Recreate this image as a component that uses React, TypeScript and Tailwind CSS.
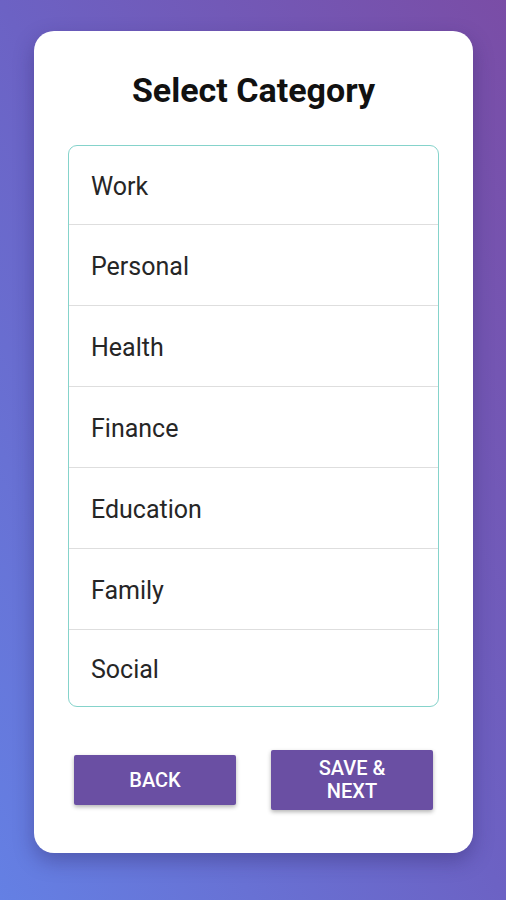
const categories = ["Work", "Personal", "Health", "Finance", "Education", "Family", "Social"];

function App() {
    return (
        <div
            className="w-[506px] h-[900px] bg-[linear-gradient(to_top_right,#6480e4_0%,#6c62c4_50%,#7a4da6_100%)] pt-[31px] px-[34px]"
            style={{ fontFamily: "Roboto, 'Liberation Sans', sans-serif" }}
        >
            <div className="w-[439px] h-[822px] bg-white rounded-[20px] shadow-[0_8px_20px_rgba(40,30,90,0.35)] pt-[38px] px-[34px] flex flex-col">
                {/* Título */}
                <h1 className="text-[34px] leading-[42px] font-bold text-[#111] text-center">Select Category</h1>

                {/* Lista de categorias */}
                <div className="mt-[34px] border border-[#85d3cb] rounded-[9px] overflow-hidden">
                    {categories.map((c, i) => {
                        const h = i === 0 ? "h-[78px]" : i === categories.length - 1 ? "h-[77px]" : "h-[81px]";
                        return (
                            <div
                                key={c}
                                className={`flex items-center pl-[22px] pt-[4px] text-[25px] text-[#262626] ${i > 0 ? "border-t border-[#dedede]" : ""} ${h}`}
                            >
                                {c}
                            </div>
                        );
                    })}
                </div>

                {/* Botões */}
                <div className="mt-[43px] px-[6px] flex items-center justify-between">
                    <button className="w-[162px] h-[50px] bg-[#6a4fa3] text-white text-[20px] font-medium uppercase rounded-[2px] shadow-[0_2px_4px_rgba(0,0,0,0.3)]">
                        Back
                    </button>
                    <button className="w-[162px] h-[60px] bg-[#6a4fa3] text-white text-[20px] leading-[23px] font-medium uppercase rounded-[2px] shadow-[0_2px_4px_rgba(0,0,0,0.3)] px-8">
                        Save & Next
                    </button>
                </div>
            </div>
        </div>
    );
}

export default App;
